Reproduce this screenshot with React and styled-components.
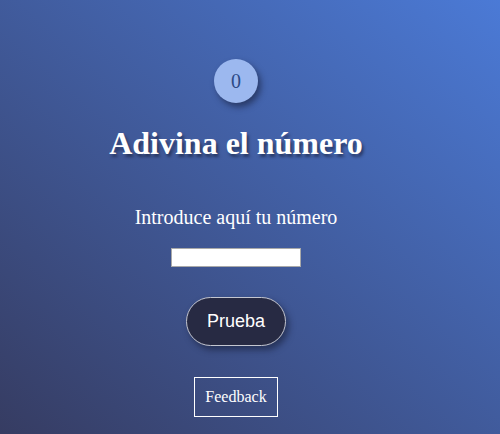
import React, { useState } from "react";
import styled, { createGlobalStyle } from "styled-components";

const GlobalStyle = createGlobalStyle`
  html, body {
    margin: 0;
    padding: 0;
    height: 100%;
  }
  body {
    font-family: "Liberation Serif", "Times New Roman", serif;
    background: linear-gradient(to top right, #363c62, #4b7ad6);
    color: #ffffff;
  }
`;

const App = () => {
  const [guess, setGuess] = useState("");
  const [score] = useState(0);

  return (
    <>
      <GlobalStyle />
      <Page>
        <Score>{score}</Score>
        <Title>Adivina el número</Title>
        <Label htmlFor="guess">Introduce aquí tu número</Label>
        <Input
          id="guess"
          value={guess}
          onChange={(e) => setGuess(e.target.value)}
        />
        <TryButton>Prueba</TryButton>
        <FeedbackBox>Feedback</FeedbackBox>
      </Page>
    </>
  );
};

export default App;

const Page = styled.main`
  width: 472px;
  height: 434px;
  display: flex;
  flex-direction: column;
  align-items: center;
  padding-top: 59px;
  box-sizing: border-box;
`;

const Score = styled.div`
  width: 44px;
  height: 44px;
  border-radius: 50%;
  background-color: #9cb8ef;
  color: #2c4a86;
  font-size: 20px;
  display: flex;
  align-items: center;
  justify-content: center;
  box-shadow: 3px 4px 6px rgba(20, 25, 50, 0.55);
`;

const Title = styled.h1`
  margin: 22px 0 0;
  font-size: 32px;
  font-weight: bold;
  line-height: 37px;
  text-shadow: 2px 3px 3px rgba(20, 25, 50, 0.55);
`;

const Label = styled.label`
  margin-top: 44px;
  font-size: 20px;
  line-height: 23px;
`;

const Input = styled.input`
  margin-top: 19px;
  width: 130px;
  height: 19px;
  box-sizing: border-box;
  border: 1px solid #a9a9a9;
  background: #ffffff;
  padding: 0 4px;
  outline: none;
`;

const TryButton = styled.button`
  margin-top: 30px;
  width: 100px;
  height: 49px;
  border-radius: 25px;
  border: 1px solid #c4c6d0;
  background-color: #272a43;
  color: #ffffff;
  font-family: "Liberation Sans", Arial, sans-serif;
  font-size: 18px;
  box-shadow: 3px 4px 6px rgba(20, 25, 50, 0.55);
  cursor: pointer;
`;

const FeedbackBox = styled.div`
  margin-top: 31px;
  width: 84px;
  height: 40px;
  box-sizing: border-box;
  border: 1px solid #ffffff;
  display: flex;
  align-items: center;
  justify-content: center;
  font-size: 16px;
`;
